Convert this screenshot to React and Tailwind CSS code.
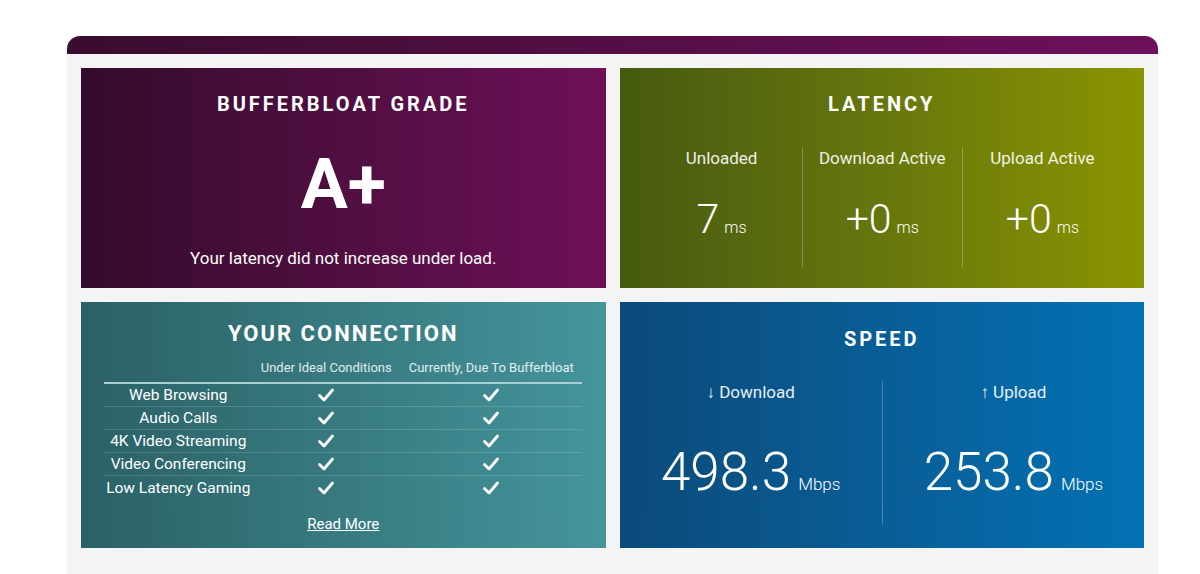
import React from "react";

const font = { fontFamily: "Roboto, 'Noto Sans', sans-serif" };

function Check() {
  return (
    <svg width="18" height="16" viewBox="0 0 18 16" className="block">
      <path d="M2.5 8.5 L7 13 L15.5 3" fill="none" stroke="white" strokeWidth="2.8" strokeLinecap="round" strokeLinejoin="round" />
    </svg>
  );
}

function Heading({ children, className = "" }) {
  return (
    <div className={"text-center text-white font-bold text-[20px] leading-[24px] tracking-[3px] " + className}>
      {children}
    </div>
  );
}

function LatencyCol({ label, value, border }) {
  return (
    <div className={"flex flex-col items-center pb-[27px] " + (border ? "border-l border-white/25" : "")}>
      <div className="text-[17px] leading-[22px] text-white/90">{label}</div>
      <div className="mt-[30px] flex items-baseline gap-[5px] text-white">
        <span className="text-[41px] leading-none font-light">{value}</span>
        <span className="text-[16px] leading-none font-light">ms</span>
      </div>
    </div>
  );
}

function SpeedCol({ label, value, border }) {
  return (
    <div className={"flex flex-col items-center pb-[25px] " + (border ? "border-l border-white/25" : "")}>
      <div className="text-[17px] leading-[22px] text-white/90">{label}</div>
      <div className="mt-[43px] flex items-baseline gap-[7px] text-white">
        <span className="text-[53px] leading-none font-light">{value}</span>
        <span className="text-[17px] leading-none font-light">Mbps</span>
      </div>
    </div>
  );
}

const rows = ["Web Browsing", "Audio Calls", "4K Video Streaming", "Video Conferencing", "Low Latency Gaming"];

export default function App() {
  return (
    <div className="w-[1200px] h-[574px] bg-white overflow-hidden" style={font}>
      <div className="ml-[67px] mt-[36px] w-[1091px]">
        <div className="h-[18px] rounded-t-[13px] bg-linear-to-r from-[#3a0c2f] to-[#6f0f5d]" />
        <div className="bg-[#f4f4f4] grid grid-cols-2 gap-[14px] px-[14px] pt-[14px] pb-[30px]">
          {/* Bufferbloat grade */}
          <div className="h-[220px] bg-linear-to-r from-[#340b2b] to-[#6e1058] flex flex-col items-center pt-[24px]">
            <Heading>BUFFERBLOAT GRADE</Heading>
            <div className="mt-[33px] text-[70px] leading-none font-bold text-white">A+</div>
            <div className="mt-[29px] text-[17px] leading-[20px] text-white">Your latency did not increase under load.</div>
          </div>

          {/* Latency */}
          <div className="h-[220px] bg-linear-to-r from-[#465a10] to-[#8a9400] flex flex-col pt-[24px]">
            <Heading>LATENCY</Heading>
            <div className="mt-[31px] grid grid-cols-3 px-[22px]">
              <LatencyCol label="Unloaded" value="7" />
              <LatencyCol label="Download Active" value="+0" border />
              <LatencyCol label="Upload Active" value="+0" border />
            </div>
          </div>

          {/* Your connection */}
          <div className="h-[246px] bg-linear-to-r from-[#2a6166] to-[#45959c] flex flex-col items-center pt-[19px]">
            <div className="text-center text-white font-bold text-[22px] leading-[26px] tracking-[2px]">YOUR CONNECTION</div>
            <div className="mt-[12px] w-[478px]">
              <div className="grid grid-cols-[148px_148px_182px] text-[13px] leading-[18px] text-white/85 pb-[5px] border-b-2 border-[#a9cfd3]">
                <div />
                <div className="text-center whitespace-nowrap">Under Ideal Conditions</div>
                <div className="text-center whitespace-nowrap">Currently, Due To Bufferbloat</div>
              </div>
              {rows.map((r, i) => (
                <div
                  key={r}
                  className={"grid grid-cols-[148px_148px_182px] items-center h-[23px] " + (i < rows.length - 1 ? "border-b border-white/15" : "")}
                >
                  <div className="text-center text-[15.5px] leading-[20px] text-white whitespace-nowrap">{r}</div>
                  <div className="flex justify-center"><Check /></div>
                  <div className="flex justify-center"><Check /></div>
                </div>
              ))}
            </div>
            <a className="mt-[15px] text-[15px] leading-[20px] text-white underline">Read More</a>
          </div>

          {/* Speed */}
          <div className="h-[246px] bg-linear-to-r from-[#0b4a7a] to-[#0272b4] flex flex-col pt-[25px]">
            <Heading>SPEED</Heading>
            <div className="mt-[30px] grid grid-cols-2">
              <SpeedCol label="↓ Download" value="498.3" />
              <SpeedCol label="↑ Upload" value="253.8" border />
            </div>
          </div>
        </div>
      </div>
    </div>
  );
}
